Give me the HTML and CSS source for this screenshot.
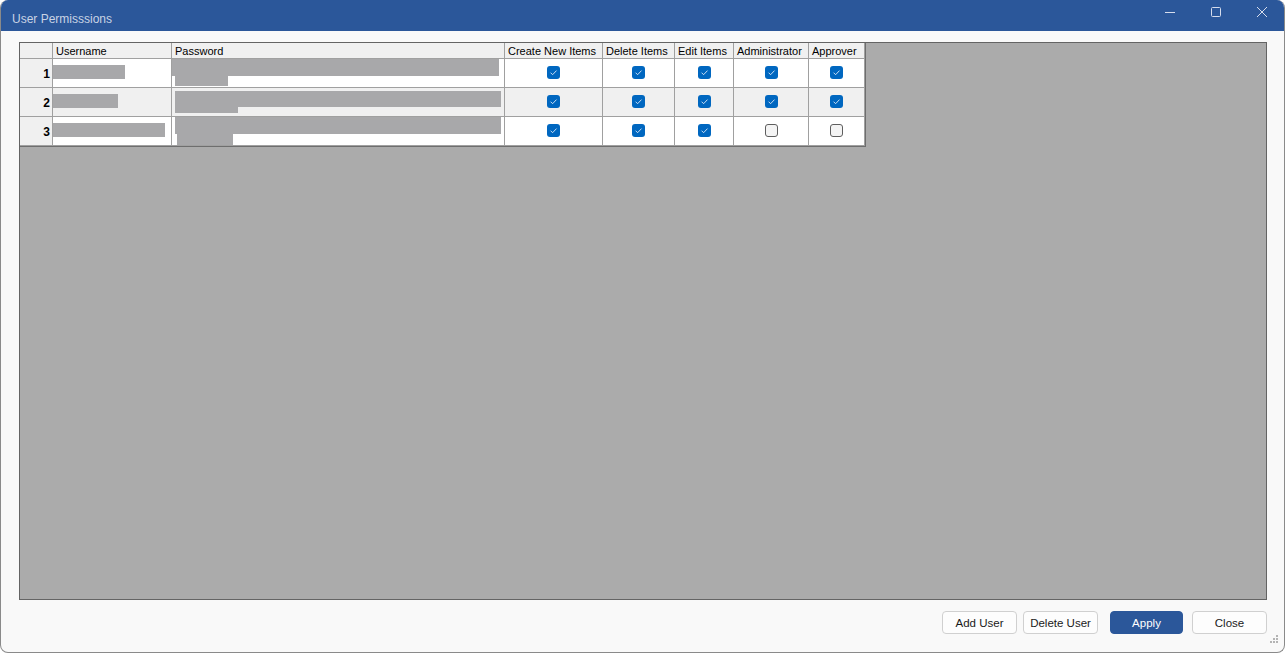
FILE: index.html
```html
<!DOCTYPE html>
<html lang="en">
<head>
  <meta charset="UTF-8" />
  <title>User Permisssions</title>
  <link rel="stylesheet" href="styles.css">
</head>
<body>

<div class="window">
  <header class="titlebar">
    <div class="title">User Permisssions</div>
    <div class="win-controls">
      <button class="win-btn" title="Minimize">
        <svg width="12" height="12" viewBox="0 0 12 12"><path d="M1 6.5h10" stroke="#d6dded" stroke-width="1"/></svg>
      </button>
      <button class="win-btn" title="Maximize">
        <svg width="12" height="12" viewBox="0 0 12 12"><rect x="1.5" y="1.5" width="9" height="9" rx="1" fill="none" stroke="#d6dded" stroke-width="1"/></svg>
      </button>
      <button class="win-btn" title="Close">
        <svg width="12" height="12" viewBox="0 0 12 12"><path d="M1 1l10 10M11 1L1 11" stroke="#d6dded" stroke-width="1"/></svg>
      </button>
    </div>
  </header>

  <div class="content">
    <div class="grid-area">
      <div class="grid">
        <!-- header row -->
        <div class="cell hdr corner"></div>
        <div class="cell hdr">Username</div>
        <div class="cell hdr">Password</div>
        <div class="cell hdr">Create New Items</div>
        <div class="cell hdr">Delete Items</div>
        <div class="cell hdr">Edit Items</div>
        <div class="cell hdr">Administrator</div>
        <div class="cell hdr">Approver</div>

        <!-- row 1 -->
        <div class="cell rowhdr">1</div>
        <div class="cell"><div class="redact" style="margin: 6px 0 0 0; width: 72px; height: 14px;"></div></div>
        <div class="cell">
          <div class="redact" style="margin: 0 0 0 0; width: 327px; height: 17px;"></div>
          <div class="redact" style="margin: 0 0 0 3px; width: 53px; height: 10px;"></div>
        </div>
        <div class="cell chk"><span class="box on"></span></div>
        <div class="cell chk"><span class="box on"></span></div>
        <div class="cell chk"><span class="box on"></span></div>
        <div class="cell chk"><span class="box on"></span></div>
        <div class="cell chk"><span class="box on"></span></div>

        <!-- row 2 -->
        <div class="cell rowhdr alt">2</div>
        <div class="cell alt"><div class="redact" style="margin: 6px 0 0 0; width: 65px; height: 14px;"></div></div>
        <div class="cell alt">
          <div class="redact" style="margin: 3px 0 0 3px; width: 326px; height: 16px;"></div>
          <div class="redact" style="margin: 0 0 0 3px; width: 63px; height: 6px;"></div>
        </div>
        <div class="cell chk alt"><span class="box on"></span></div>
        <div class="cell chk alt"><span class="box on"></span></div>
        <div class="cell chk alt"><span class="box on"></span></div>
        <div class="cell chk alt"><span class="box on"></span></div>
        <div class="cell chk alt"><span class="box on"></span></div>

        <!-- row 3 -->
        <div class="cell rowhdr">3</div>
        <div class="cell"><div class="redact" style="margin: 6px 0 0 -1px; width: 113px; height: 14px;"></div></div>
        <div class="cell">
          <div class="redact" style="margin: 0 0 0 3px; width: 326px; height: 17px;"></div>
          <div class="redact" style="margin: 0 0 0 5px; width: 56px; height: 11px;"></div>
        </div>
        <div class="cell chk"><span class="box on"></span></div>
        <div class="cell chk"><span class="box on"></span></div>
        <div class="cell chk"><span class="box on"></span></div>
        <div class="cell chk"><span class="box"></span></div>
        <div class="cell chk"><span class="box"></span></div>
      </div>
    </div>

    <div class="button-bar">
      <button class="btn">Add User</button>
      <button class="btn">Delete User</button>
      <button class="btn primary">Apply</button>
      <button class="btn last">Close</button>
    </div>
  </div>

  <svg class="grip" width="10" height="10" viewBox="0 0 10 10">
    <rect x="7" y="1" width="2" height="2" fill="#b4b4b4"/>
    <rect x="4" y="4" width="2" height="2" fill="#b4b4b4"/>
    <rect x="7" y="4" width="2" height="2" fill="#b4b4b4"/>
    <rect x="1" y="7" width="2" height="2" fill="#b4b4b4"/>
    <rect x="4" y="7" width="2" height="2" fill="#b4b4b4"/>
    <rect x="7" y="7" width="2" height="2" fill="#b4b4b4"/>
  </svg>
</div>

</body>
</html>
```

FILE: styles.css
```css
body {
  margin: 0;
  padding: 0;
  background-color: #ffffff;
  font-family: "Liberation Sans", Arial, sans-serif;
  font-size: 11px;
}

.window {
  position: relative;
  width: 1285px;
  height: 653px;
  box-sizing: border-box;
  background-color: #f9f9f9;
  border: 1px solid #8a8a8a;
  border-top: none;
  border-radius: 8px;
  overflow: hidden;
  display: flex;
  flex-direction: column;
}

.titlebar {
  background-color: #2b579a;
  height: 31px;
  display: flex;
  justify-content: space-between;
  align-items: flex-start;
  margin: 0 -1px;
}

.title {
  color: #c9d3e4;
  font-size: 12px;
  padding: 12px 0 0 12px;
}

.win-controls {
  display: flex;
}

.win-btn {
  background: none;
  border: none;
  width: 46px;
  height: 24px;
  padding: 0;
  display: flex;
  align-items: center;
  justify-content: center;
  cursor: pointer;
}

.content {
  flex: 1;
  display: flex;
  flex-direction: column;
  padding: 11px 17px 0 18px;
}

.grid-area {
  height: 558px;
  box-sizing: border-box;
  background-color: #ababab;
  border: 1px solid #646464;
}

.grid {
  display: inline-grid;
  grid-template-columns: 33px 119px 333px 98px 72px 59px 75px 56px;
  grid-template-rows: 16px 29px 29px 29px;
  border-right: 1px solid #6e6e6e;
  border-bottom: 1px solid #6e6e6e;
}

.cell {
  box-sizing: border-box;
  background-color: #ffffff;
  border-right: 1px solid #a0a0a0;
  border-bottom: 1px solid #a0a0a0;
  overflow: hidden;
}

.cell.alt {
  background-color: #f0f0f0;
}

.hdr {
  background-color: #f0f0f0;
  color: #000;
  padding: 1px 0 0 3px;
  line-height: 14px;
  white-space: nowrap;
}

.rowhdr {
  background-color: #f0f0f0;
  font-weight: bold;
  font-size: 12px;
  padding-right: 2px;
  display: flex;
  align-items: center;
  justify-content: flex-end;
  padding-top: 1px;
}

.redact {
  background-color: #a8a8aa;
}

.chk {
  display: flex;
  align-items: center;
  justify-content: center;
}

.box {
  width: 13px;
  height: 13px;
  box-sizing: border-box;
  border: 1px solid #5e5e5e;
  border-radius: 3px;
  background-color: #f4f4f4;
  margin-top: -1px;
}

.box.on {
  border: none;
  background-color: #0067c0;
  background-image: url("data:image/svg+xml,%3Csvg xmlns='http://www.w3.org/2000/svg' width='13' height='13' viewBox='0 0 13 13'%3E%3Cpath d='M3.6 6.7l2 2 3.9-4.1' fill='none' stroke='%23dfeaf7' stroke-width='0.9'/%3E%3C/svg%3E");
}

.button-bar {
  display: flex;
  justify-content: flex-end;
  padding-top: 11px;
}

.btn {
  font-family: "Liberation Sans", Arial, sans-serif;
  font-size: 11.5px;
  width: 75px;
  height: 23px;
  background-color: #fdfdfd;
  border: 1px solid #d0d0d0;
  border-radius: 4px;
  color: #1a1a1a;
  margin-left: 6px;
  padding: 0;
  cursor: pointer;
}

.btn.primary {
  background-color: #2b579a;
  border-color: #2b579a;
  color: #ffffff;
  width: 73px;
  margin-left: 12px;
}

.btn.last {
  margin-left: 9px;
}

.grip {
  position: absolute;
  right: 5px;
  bottom: 8px;
}
```
